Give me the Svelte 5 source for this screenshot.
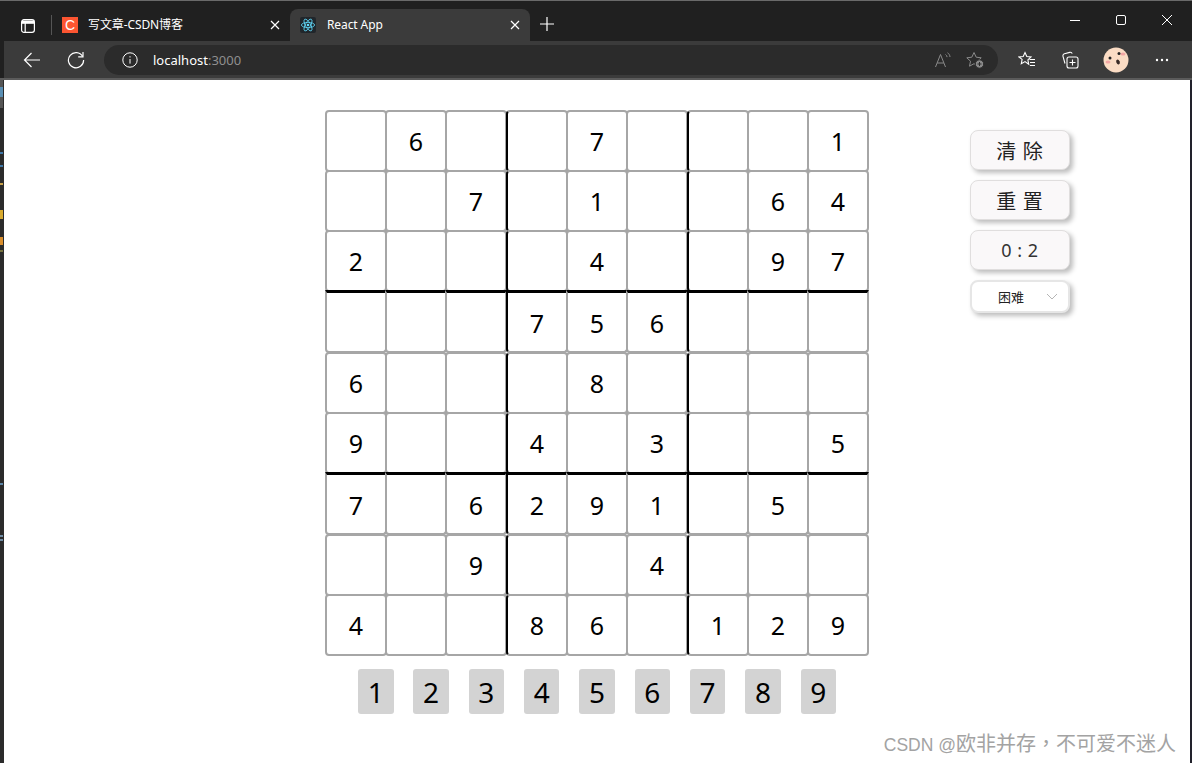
<script lang="ts">
	const puzzle = [
		[0, 6, 0, 0, 7, 0, 0, 0, 1],
		[0, 0, 7, 0, 1, 0, 0, 6, 4],
		[2, 0, 0, 0, 4, 0, 0, 9, 7],
		[0, 0, 0, 7, 5, 6, 0, 0, 0],
		[6, 0, 0, 0, 8, 0, 0, 0, 0],
		[9, 0, 0, 4, 0, 3, 0, 0, 5],
		[7, 0, 6, 2, 9, 1, 0, 5, 0],
		[0, 0, 9, 0, 0, 4, 0, 0, 0],
		[4, 0, 0, 8, 6, 0, 1, 2, 9]
	];
	const digits = [1, 2, 3, 4, 5, 6, 7, 8, 9];
	// bits of the editor window peeking out behind the browser
	const spots = [
		{ top: 0, height: 28, color: '#555555' },
		{ top: 7, height: 10, color: '#5a8fb4' },
		{ top: 72, height: 2, color: '#3f78a8' },
		{ top: 85, height: 2, color: '#3f78a8' },
		{ top: 103, height: 2, color: '#c9a24a' },
		{ top: 130, height: 9, color: '#d8aa2e' },
		{ top: 157, height: 8, color: '#d98e2c' },
		{ top: 170, height: 2, color: '#77733f' },
		{ top: 403, height: 2, color: '#5d86a8' },
		{ top: 455, height: 2, color: '#6f8ba3' },
		{ top: 459, height: 2, color: '#6f8ba3' }
	];
</script>

<div class="window">
	<header class="chrome">
		<div class="tabbar">
			<svg class="tab-actions" width="16" height="16" viewBox="0 0 16 16" fill="none" stroke="#fff" stroke-width="1.2">
				<rect x="1.6" y="1.6" width="12.8" height="12.8" rx="2.4" />
				<path d="M1.6 5.2h12.8M5.2 5.2v9.2" />
				<path d="M2 2.5h12v2.7H2z" fill="#fff" stroke="none" />
			</svg>
			<span class="tab-sep"></span>
			<div class="tab">
				<span class="csdn-icon">C</span>
				<span class="tab-title">写文章-CSDN博客</span>
				<svg class="tab-close" width="10" height="10" viewBox="0 0 10 10" stroke="#fff" stroke-width="1.2"><path d="M1 1l8 8M9 1l-8 8" /></svg>
			</div>
			<div class="tab active">
				<span class="react-icon">
					<svg width="16" height="16" viewBox="0 0 16 16" fill="none" stroke="#61dafb" stroke-width="0.8">
						<circle cx="8" cy="8" r="1.3" fill="#61dafb" stroke="none" />
						<ellipse cx="8" cy="8" rx="6.6" ry="2.6" />
						<ellipse cx="8" cy="8" rx="6.6" ry="2.6" transform="rotate(60 8 8)" />
						<ellipse cx="8" cy="8" rx="6.6" ry="2.6" transform="rotate(120 8 8)" />
					</svg>
				</span>
				<span class="tab-title">React App</span>
				<svg class="tab-close" width="10" height="10" viewBox="0 0 10 10" stroke="#fff" stroke-width="1.2"><path d="M1 1l8 8M9 1l-8 8" /></svg>
			</div>
			<svg class="new-tab" width="16" height="16" viewBox="0 0 16 16" stroke="#fff" stroke-width="1.2"><path d="M8 1v14M1 8h14" /></svg>
			<div class="win-controls">
				<svg width="12" height="12" viewBox="0 0 12 12" stroke="#fff" stroke-width="1"><path d="M1 6.5h10" /></svg>
				<svg width="12" height="12" viewBox="0 0 12 12" fill="none" stroke="#fff" stroke-width="1"><rect x="1.5" y="1.5" width="9" height="9" rx="1.5" /></svg>
				<svg width="12" height="12" viewBox="0 0 12 12" stroke="#fff" stroke-width="1"><path d="M1 1l10 10M11 1L1 11" /></svg>
			</div>
		</div>
		<div class="toolbar">
			<svg class="nav" width="18" height="18" viewBox="0 0 18 18" fill="none" stroke="#fff" stroke-width="1.2"><path d="M17 9H1.5M8.5 2L1.5 9l7 7" /></svg>
			<svg class="nav" width="18" height="18" viewBox="0 0 18 18" fill="none" stroke="#fff" stroke-width="1.2"><path d="M15.6 5.4A7.6 7.6 0 1 0 16.6 9" /><path d="M16 1v4.8h-4.8" /></svg>
			<div class="address">
				<svg width="16" height="16" viewBox="0 0 16 16" fill="none" stroke="#fff" stroke-width="1"><circle cx="8" cy="8" r="7.2" /><path d="M8 7v4.6" /><path d="M8 4.2v1.3" /></svg>
				<span class="url">localhost<em>:3000</em></span>
				<svg class="addr-end" width="18" height="18" viewBox="0 0 18 18" fill="none" stroke="#8a8a8a" stroke-width="1"><path d="M1.5 16L6.5 3.5 11.5 16M3.2 12h6.6" /><path d="M11.5 3.5c1 .6 1.5 1.5 1.6 2.6M13.5 1.8c1.6 1 2.4 2.5 2.5 4.2" /></svg>
				<svg width="20" height="18" viewBox="0 0 20 18" fill="none" stroke="#8a8a8a" stroke-width="1">
					<path d="M9 1.5l2.2 4.7 5 .6-3.7 3.4 1 5-4.5-2.5-4.5 2.5 1-5L1.800 6.800l5-.6z" />
					<circle cx="14.500" cy="13" r="4.200" fill="#8a8a8a" stroke="#2b2b2b" />
					<path d="M12.500 13h4M14.500 11v4" stroke="#2b2b2b" />
				</svg>
			</div>
			<div class="tools">
				<svg width="18" height="18" viewBox="0 0 18 18" fill="none" stroke="#fff" stroke-width="1.1"><path d="M7 1.500l1.800 4 4.200.5-3.100 2.900.8 4.300L7 10.600l-3.700 2.100.8-4.300L1 6l4.200-.5z" /><path d="M11.500 8.500h5.500M12 11.500h5M12 14.500h5" /></svg>
				<svg class="collections" width="18" height="18" viewBox="0 0 18 18" fill="none" stroke="#fff" stroke-width="1.1"><path d="M4 12.500L2 5.300a2 2 0 0 1 1.400-2.500l5.400-1.400a2 2 0 0 1 2.400 1.200" /><rect x="6" y="6" width="11" height="11" rx="2" /><path d="M11.500 8.500v6M8.500 11.500h6" /></svg>
				<svg class="avatar" width="26" height="26" viewBox="0 0 26 26">
					<circle cx="13" cy="13" r="12.500" fill="#fbdcc4" />
					<ellipse cx="20" cy="7" rx="2.500" ry="1.600" fill="#f3a6a4" />
					<ellipse cx="5" cy="15" rx="2.500" ry="1.600" fill="#f3a6a4" />
					<circle cx="16" cy="6.500" r="1.500" fill="#222" />
					<circle cx="7" cy="11" r="1.500" fill="#222" />
					<ellipse cx="15" cy="15" rx="1.700" ry="2.500" fill="#3a2a26" transform="rotate(-25 15 15)" />
				</svg>
				<svg width="14" height="4" viewBox="0 0 14 4" fill="#fff"><circle cx="2" cy="2" r="1.200" /><circle cx="7" cy="2" r="1.200" /><circle cx="12" cy="2" r="1.200" /></svg>
			</div>
		</div>
	</header>

	<div class="viewport">
		<div class="edge-left">
			{#each spots as s}
				<i style="top: {s.top}px; height: {s.height}px; background: {s.color}"></i>
			{/each}
		</div>
		<main class="page">
			<div class="game">
				<div class="board">
					{#each puzzle as row, r}
						{#each row as value, c}
							<div class="cell" class:thick-left={c === 3 || c === 6} class:thick-top={r === 3 || r === 6}>
								{value || ''}
							</div>
						{/each}
					{/each}
				</div>
				<div class="pad">
					{#each digits as d}
						<div class="pad-key">{d}</div>
					{/each}
				</div>
			</div>
			<aside class="controls">
				<button class="ctl">清 除</button>
				<button class="ctl">重 置</button>
				<div class="ctl timer">0 : 2</div>
				<div class="ctl select">
					<span>困难</span>
					<svg width="12" height="7" viewBox="0 0 12 7" fill="none" stroke="#b5b5b5" stroke-width="1"><path d="M1 1l5 5 5-5" /></svg>
				</div>
			</aside>
		</main>
		<div class="edge-right"></div>
		<div class="watermark"><span class="latin">CSDN @</span>欧非并存<span class="comma">，</span>不可爱不迷人</div>
	</div>
</div>

<style>
	:global(body) {
		margin: 0;
		background: #fff;
		overflow: hidden;
	}

	.window {
		width: 1192px;
		height: 763px;
		display: flex;
		flex-direction: column;
		font-family: 'Noto Sans', 'Noto Sans CJK SC', sans-serif;
	}

	.chrome {
		height: 80px;
		flex-shrink: 0;
		background: #202020;
		border-top: 1px solid #6a6a6a;
		box-sizing: border-box;
		padding-left: 4px;
		display: flex;
		flex-direction: column;
		border-bottom: 2px solid #5b5b5b;
	}

	.tabbar {
		height: 40px;
		display: flex;
		align-items: flex-end;
		position: relative;
	}

	.tab-actions {
		margin: 0 15px 7px 16px;
	}

	.tab-sep {
		width: 1px;
		height: 20px;
		margin-bottom: 6px;
		background: #555;
	}

	.tab {
		width: 238px;
		height: 32px;
		box-sizing: border-box;
		padding: 0 10px;
		display: flex;
		align-items: center;
		color: #fff;
		font-size: 12px;
	}

	.tab.active {
		width: 240px;
		background: #3b3b3b;
		border-radius: 8px 8px 0 0;
	}

	.csdn-icon {
		width: 16px;
		height: 16px;
		background: #fc5531;
		color: #fff;
		font-size: 14px;
		line-height: 16px;
		text-align: center;
		font-weight: 500;
		font-family: 'Liberation Sans', sans-serif;
	}

	.react-icon {
		width: 16px;
		height: 16px;
		background: #20262b;
		border-radius: 2px;
		display: flex;
	}

	.tab-title {
		flex: 1;
		margin-left: 10px;
		padding-bottom: 2px;
		letter-spacing: -0.1px;
	}

	.active .tab-title {
		margin-left: 11px;
	}

	.new-tab {
		margin: 0 0 9px 9px;
	}

	.win-controls {
		position: absolute;
		right: 19px;
		top: 13px;
		display: flex;
		gap: 34px;
	}

	.toolbar {
		height: 37px;
		background: #3b3b3b;
		display: flex;
		align-items: center;
		padding-left: 19px;
	}

	.nav {
		margin-right: 26px;
	}

	.address {
		width: 894px;
		height: 30px;
		margin-left: -7px;
		box-sizing: border-box;
		padding: 0 13px 0 18px;
		background: #2b2b2b;
		border-radius: 15px;
		display: flex;
		align-items: center;
		gap: 13px;
	}

	.url {
		flex: 1;
		margin-left: 2px;
		color: #fff;
		font-size: 13px;
	}

	.url em {
		font-style: normal;
		color: #8f8f8f;
	}

	.tools {
		display: flex;
		align-items: center;
		gap: 27px;
		margin-left: 20px;
	}

	.tools .collections {
		margin-left: -2px;
	}

	.tools .avatar {
		margin-left: -3px;
		margin-right: -1px;
	}

	.viewport {
		flex: 1;
		display: flex;
		position: relative;
	}

	.edge-left {
		width: 4px;
		background: #2b2b2b;
		position: relative;
	}

	.edge-left i {
		position: absolute;
		left: 0;
		width: 3px;
	}

	.edge-right {
		width: 2px;
		background: #22222c;
	}

	.page {
		flex: 1;
		display: flex;
		align-items: flex-start;
		padding-left: 321px;
	}

	.game {
		margin-top: 30px;
		width: 544px;
	}

	.board {
		display: grid;
		grid-template-columns: 60px 60px 61px 60px 60px 61px 60px 60px 62px;
		grid-template-rows: 60px 60px 61px 61px 60px 61px 61px 60px 62px;
	}

	.cell {
		width: 62px;
		height: 62px;
		box-sizing: border-box;
		border: 2px solid #a6a6a6;
		border-radius: 4px;
		display: flex;
		align-items: center;
		justify-content: center;
		font-size: 25px;
		color: #000;
		background: transparent;
	}

	.thick-left {
		border-left-color: #000;
	}

	.thick-top {
		border-top-color: #000;
		border-top-width: 3px;
		border-radius: 0 0 4px 4px;
		height: 63px;
		margin-top: -1px;
		padding-top: 1px;
	}

	.pad {
		display: flex;
		justify-content: space-between;
		width: 478px;
		margin: 13px auto 0;
	}

	.pad-key {
		width: 35.5px;
		height: 45px;
		background: #d3d3d3;
		border-radius: 3px;
		display: flex;
		align-items: center;
		justify-content: center;
		font-size: 28px;
		color: #000;
	}

	.controls {
		width: 100px;
		margin: 50px 0 0 101px;
		display: flex;
		flex-direction: column;
		gap: 10px;
	}

	.ctl {
		width: 100px;
		height: 40px;
		box-sizing: border-box;
		padding: 0;
		border: 1px solid #e0dede;
		border-radius: 8px;
		background: #faf8f9;
		box-shadow: 3px 3px 5px #bdbdbd;
		display: flex;
		align-items: center;
		justify-content: center;
		font-family: 'Noto Sans CJK SC', sans-serif;
		font-size: 20px;
		letter-spacing: 1px;
		color: #222;
	}

	.timer {
		font-family: 'Noto Sans', sans-serif;
		font-size: 18px;
		letter-spacing: 0.5px;
		color: #333;
	}

	.select {
		height: 33px;
		background: #fff;
		border: 2px solid #e6e6e6;
		justify-content: flex-start;
		padding-left: 26px;
		font-size: 13px;
		letter-spacing: 0;
		gap: 22px;
	}

	.watermark {
		position: absolute;
		right: 16px;
		bottom: 5px;
		font-family: 'Liberation Sans', 'Noto Sans CJK SC', sans-serif;
		font-size: 20px;
		line-height: 26px;
		color: #a3a3a3;
		white-space: nowrap;
	}

	.latin {
		font-size: 17.5px;
	}

	.comma {
		font-family: 'Noto Sans CJK TC', sans-serif;
	}
</style>
